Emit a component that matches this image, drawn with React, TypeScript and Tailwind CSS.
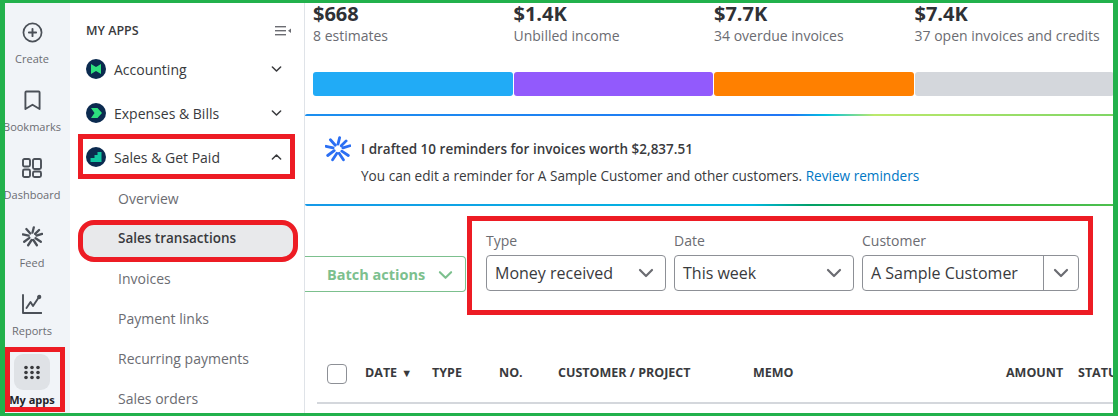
import { ReactNode } from 'react';

const font = { fontFamily: '"Open Sans", "Liberation Sans", sans-serif' };

function Chevron({ className, up }: { className: string; up?: boolean }) {
  return (
    <svg viewBox="0 0 16 10" fill="none" stroke="currentColor" strokeWidth="2.2" strokeLinecap="round" strokeLinejoin="round" className={className}>
      <path d={up ? 'M2 8 L8 2 L14 8' : 'M2 2 L8 8 L14 2'} />
    </svg>
  );
}

function Burst({ className }: { className: string }) {
  return (
    <svg viewBox="0 0 24 24" fill="none" stroke="currentColor" strokeWidth="2.6" strokeLinecap="round" className={className}>
      <path d="M13.5 1.5 L12 7.5 M5 3.5 L9.5 8.5 M19.5 4.5 L15 9 M1 9.5 L7.5 11 M23 9 L16.5 11 M2.5 18 L8.5 13.5 M21.5 18 L15.5 14 M7 22 L11 16 M13 16 L17 22" />
    </svg>
  );
}

function RailItem({ icon, label, active }: { icon: ReactNode; label: string; active?: boolean }) {
  return (
    <div className="w-[64px] h-[68px] flex flex-col items-center shrink-0">
      <div className={`w-9 h-9 rounded-[9px] flex items-center justify-center text-[#4b5058] ${active ? 'bg-[#dfe2e6] text-[#393a3d]' : ''}`}>{icon}</div>
      <div className={`text-[11px] leading-[14px] mt-[2px] whitespace-nowrap ${active ? 'font-bold text-[#1f2329] mt-[3px]' : 'text-[#6b6c72]'}`}>{label}</div>
    </div>
  );
}

function AppRow({ icon, label, open }: { icon: ReactNode; label: string; open?: boolean }) {
  return (
    <div className="h-[44px] flex items-center pl-[16px] pr-[22px]">
      <svg viewBox="0 0 20 20" className="w-5 h-5 shrink-0">
        <circle cx="10" cy="10" r="10" fill="#0b2a4f" />
        {icon}
      </svg>
      <span className="ml-2 text-[14px] text-[#393a3d]">{label}</span>
      <Chevron up={open} className="ml-auto w-[11px] h-[8px] text-[#393a3d]" />
    </div>
  );
}

function SubRow({ label, active }: { label: string; active?: boolean }) {
  return (
    <div className={`h-[36px] mb-[4px] ml-[10px] mr-[8px] pl-[38px] flex items-center rounded-[10px] ${active ? 'bg-[#e8e9eb] text-[13.5px] font-semibold text-[#393a3d]' : 'text-[14px] text-[#6b6c72]'}`}>
      {label}
    </div>
  );
}

function Stat({ value, label }: { value: string; label: string }) {
  return (
    <div className="w-[200.5px] shrink-0 whitespace-nowrap">
      <div className="text-[20px] leading-[24px] font-bold text-[#2f3136]">{value}</div>
      <div className="text-[14px] leading-[20px] text-[#6b6c72]">{label}</div>
    </div>
  );
}

function Field({ label, value, width }: { label: string; value: string; width: string }) {
  return (
    <div className={width}>
      <div className="text-[14px] leading-[12px] text-[#6b6c72] h-[20px]">{label}</div>
      <div className="h-[36px] rounded-[4px] border border-[#8d9096] flex items-center pl-2 pr-[11px] text-[16px] text-[#393a3d]">
        <span>{value}</span>
        <Chevron className="ml-auto w-[16px] h-[10px] text-[#6b6c72]" />
      </div>
    </div>
  );
}

export default function App() {
  return (
    <div className="relative w-[1118px] h-[416px] overflow-hidden flex bg-white" style={font}>
      {/* left rail */}
      <div className="w-[70px] shrink-0 bg-[#f1f4f8] pt-[14px] flex flex-col">
        <RailItem label="Create" icon={
          <svg viewBox="0 0 22 22" fill="none" stroke="currentColor" strokeWidth="1.8" strokeLinecap="round" className="w-[21px] h-[21px]">
            <circle cx="11" cy="11" r="9.5" />
            <path d="M11 7.2 V14.8 M7.2 11 H14.8" strokeWidth="2" />
          </svg>
        } />
        <RailItem label="Bookmarks" icon={
          <svg viewBox="0 0 18 22" fill="none" stroke="currentColor" strokeWidth="2" strokeLinejoin="round" className="w-[17px] h-[21px]">
            <path d="M2.5 1.5 H15.5 Q16.5 1.5 16.5 2.5 V20 L9 15.5 L1.5 20 V2.5 Q1.5 1.5 2.5 1.5 Z" />
          </svg>
        } />
        <RailItem label="Dashboard" icon={
          <svg viewBox="0 0 20 20" fill="none" stroke="currentColor" strokeWidth="1.9" className="w-5 h-5">
            <rect x="1" y="1" width="7" height="7.5" rx="1.5" />
            <rect x="1" y="11.5" width="7" height="7.5" rx="1.5" />
            <rect x="11" y="1" width="8" height="10" rx="1.5" />
            <rect x="11" y="13.5" width="8" height="5.5" rx="1.5" />
          </svg>
        } />
        <RailItem label="Feed" icon={<Burst className="w-[21px] h-[21px]" />} />
        <RailItem label="Reports" icon={
          <svg viewBox="0 0 20 20" fill="none" stroke="currentColor" strokeWidth="1.9" strokeLinecap="round" strokeLinejoin="round" className="w-5 h-5">
            <path d="M1 1 V19 H19.5" />
            <path d="M4.5 14 L8.5 8 L11 12 L17 3" />
            <circle cx="17.2" cy="3" r="1.2" fill="currentColor" />
          </svg>
        } />
        <RailItem active label="My apps" icon={
          <svg viewBox="0 0 16 14" fill="currentColor" className="w-4 h-[15px]">
            {[2, 7, 12].map((y) => [2, 8, 14].map((x) => <circle key={`${x}-${y}`} cx={x} cy={y} r="1.8" />))}
          </svg>
        } />
      </div>

      {/* apps panel */}
      <div className="w-[235px] shrink-0 border-r border-[#dfe3e8] rounded-tl-[14px] bg-white pt-[21px] overflow-hidden">
        <div className="flex items-center h-[20px] pl-[16px] pr-[13px] mb-[6px]">
          <span className="text-[12.5px] font-semibold text-[#393a3d]">MY APPS</span>
          <svg viewBox="0 0 16 10" fill="#6b6c72" className="ml-auto w-4 h-[10px]">
            <rect x="0" y="0" width="11" height="1.4" />
            <rect x="0" y="4" width="11" height="1.4" />
            <rect x="0" y="8" width="11" height="1.4" />
            <path d="M16 2.5 V7 L13 4.7 Z" />
          </svg>
        </div>
        <AppRow label="Accounting" icon={<path d="M5 5 L10 8 L15 5 V15 L10 12 L5 15 Z" fill="#2ee07e" />} />
        <AppRow label="Expenses &amp; Bills" icon={<path d="M5 5 H11.5 L16 10 L11.5 15 H5 L8.5 10 Z" fill="#2ee07e" />} />
        <AppRow open label="Sales &amp; Get Paid" icon={<path d="M4.5 15 V11 H8.5 V8 H11.5 V5 H15.5 V15 Z" fill="#12c6a0" />} />
        <div className="pt-[1.5px]">
          <SubRow label="Overview" />
          <SubRow active label="Sales transactions" />
          <SubRow label="Invoices" />
          <SubRow label="Payment links" />
          <SubRow label="Recurring payments" />
          <SubRow label="Sales orders" />
        </div>
      </div>

      {/* main */}
      <div className="flex-1 min-w-0 overflow-hidden pt-[2px]">
        <div className="flex pl-[8px]">
          <Stat value="$668" label="8 estimates" />
          <Stat value="$1.4K" label="Unbilled income" />
          <Stat value="$7.7K" label="34 overdue invoices" />
          <Stat value="$7.4K" label="37 open invoices and credits" />
        </div>
        <div className="flex gap-[1px] pl-[8px] mt-[26px] h-[24px]">
          <div className="w-[199.5px] shrink-0 rounded-[3px] bg-[#21abf6]" />
          <div className="w-[199.5px] shrink-0 rounded-[3px] bg-[#925afc]" />
          <div className="w-[199.5px] shrink-0 rounded-[3px] bg-[#ff8000]" />
          <div className="w-[199.5px] shrink-0 rounded-[3px] bg-[#d4d7dc]" />
        </div>
        <div className="mt-[18px] h-[92px] flex flex-col">
          <div className="h-[2px] rounded-tl-[6px] bg-[linear-gradient(90deg,#1b8fef_0%,#2176f5_60%,#00c1e0_64%,#bce96b_70%,#7ed565_100%)]" />
          <div className="flex-1 flex pl-[20px] pt-[23px]">
            <Burst className="w-[26px] h-[26px] -mt-[3px] text-[#2b6ff3] shrink-0" />
            <div className="ml-[10px]">
              <div className="text-[13.5px] leading-[20px] font-semibold text-[#393a3d]">I drafted 10 reminders for invoices worth $2,837.51</div>
              <div className="text-[13.6px] leading-[20px] mt-[7px] text-[#393a3d] whitespace-nowrap">
                You can edit a reminder for A Sample Customer and other customers. <span className="text-[#0077c5]">Review reminders</span>
              </div>
            </div>
          </div>
          <div className="h-[2px] rounded-bl-[6px] bg-[linear-gradient(90deg,#1699e8_0%,#00b8e0_55%,#009f6b_62%,#22ac38_70%,#4fc04f_100%)]" />
        </div>
        <div className="flex items-start mt-[29px]">
          <div className="mt-[21px] w-[161px] h-[36px] rounded-r-[4px] border border-l-0 border-[#7cc08e] flex items-center pl-[22px] pt-[1px] text-[#7cc08e] text-[14.5px] font-bold">
            Batch actions
            <Chevron className="ml-[13px] w-[15px] h-[10px]" />
          </div>
          <div className="ml-[20px] flex gap-[8px]">
            <Field label="Type" value="Money received" width="w-[180px]" />
            <Field label="Date" value="This week" width="w-[180px]" />
            <div className="w-[217px]">
              <div className="text-[14px] leading-[12px] text-[#6b6c72] h-[20px]">Customer</div>
              <div className="h-[36px] rounded-[4px] border border-[#8d9096] flex items-center text-[16px] text-[#393a3d]">
                <span className="w-[181px] pl-2 h-full flex items-center border-r border-[#8d9096] shrink-0">A Sample Customer</span>
                <Chevron className="mx-auto w-[16px] h-[10px] text-[#6b6c72]" />
              </div>
            </div>
          </div>
        </div>
        <div className="flex items-center h-[20px] mt-[71.5px] pl-[22px] text-[12.5px] font-bold text-[#393a3d] whitespace-nowrap">
          <div className="w-[20px] h-[20px] rounded-[4px] border border-[#8d9096] shrink-0" />
          <span className="ml-[18px] w-[67px] shrink-0 flex items-center">DATE<span className="ml-[4px] text-[11px]">▼</span></span>
          <span className="w-[67px] shrink-0">TYPE</span>
          <span className="w-[59px] shrink-0">NO.</span>
          <span className="w-[195px] shrink-0">CUSTOMER / PROJECT</span>
          <span className="w-[253px] shrink-0">MEMO</span>
          <span className="w-[72px] shrink-0">AMOUNT</span>
          <span className="shrink-0">STATUS</span>
        </div>
        <div className="ml-[12px] mt-[18.5px] h-[2px] bg-[#d4d7dc]" />
      </div>

      {/* annotation frames drawn over the screenshot */}
      <div className="absolute left-[78px] top-[134px] w-[217px] h-[45px] border-[5px] border-[#ed1c24] pointer-events-none" />
      <div className="absolute left-[78px] top-[220px] w-[220px] h-[42px] border-[5px] border-[#ed1c24] rounded-[16px] pointer-events-none" />
      <div className="absolute left-[467px] top-[216px] w-[626px] h-[99px] border-[5px] border-[#ed1c24] pointer-events-none" />
      <div className="absolute left-[5px] top-[347px] w-[60px] h-[65px] border-[5px] border-[#ed1c24] pointer-events-none" />
      <div className="absolute inset-0 border-x-[5px] border-y-[3px] border-[#22b14c] pointer-events-none" />
    </div>
  );
}
